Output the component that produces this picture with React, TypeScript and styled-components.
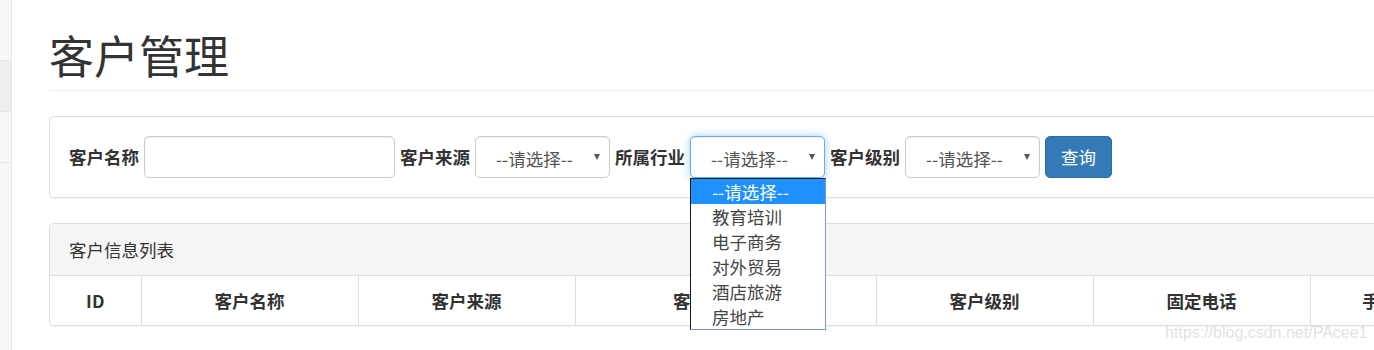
import React from "react";
import styled, { createGlobalStyle, css } from "styled-components";

const GlobalStyle = createGlobalStyle`
  html, body {
    margin: 0;
    padding: 0;
    background: #fff;
    overflow: hidden;
  }
  body {
    font-family: "Noto Sans CJK SC", "Liberation Sans", sans-serif;
    color: #333;
    font-size: 17.5px;
  }
  * { box-sizing: border-box; }
`;

const Page = styled.div`
  display: flex;
  width: 1700px;
  min-height: 350px;
  position: relative;
`;

const Sidebar = styled.nav`
  width: 12px;
  flex: none;
  background: #f8f8f8;
  border-right: 1px solid #e7e7e7;
  display: flex;
  flex-direction: column;
`;

const NavItem = styled.div<{ $h: number; $active?: boolean }>`
  height: ${(p) => p.$h}px;
  background: ${(p) => (p.$active ? "#eeeeee" : "transparent")};
  border-bottom: 1px solid #e7e7e7;
`;

const Main = styled.main`
  flex: 1;
  padding: 0 0 0 37px;
`;

const Title = styled.h1`
  margin: 30px 0 0;
  padding-bottom: 11px;
  border-bottom: 1px solid #eeeeee;
  font-size: 45px;
  line-height: 49px;
  font-weight: 400;
  color: #333;
`;

const Panel = styled.section`
  margin-top: 25px;
  border: 1px solid #dddddd;
  border-radius: 5px;
  background: #fff;
  box-shadow: 0 1px 1px rgba(0, 0, 0, 0.05);
`;

const SearchBody = styled.div`
  height: 80px;
  padding: 0 19px;
  display: flex;
  align-items: center;
`;

const Label = styled.label`
  font-weight: 700;
  font-size: 17.5px;
  color: #333;
  white-space: nowrap;
  margin-right: 5px;
  line-height: 24px;
`;

const inputBase = css`
  height: 42px;
  flex: none;
  border: 1px solid #cccccc;
  border-radius: 5px;
  background: #fff;
  box-shadow: inset 0 1px 1px rgba(0, 0, 0, 0.075);
`;

const TextInput = styled.div`
  ${inputBase};
  width: 251px;
  margin-right: 5px;
`;

const SelectBox = styled.div<{ $focused?: boolean }>`
  ${inputBase};
  position: relative;
  width: 135px;
  margin-right: 5px;
  display: flex;
  align-items: center;
  justify-content: space-between;
  padding: 0 9px 0 20px;
  color: #555;
  font-size: 17.5px;
  ${(p) =>
    p.$focused &&
    css`
      border-color: #66afe9;
      box-shadow: inset 0 1px 1px rgba(0, 0, 0, 0.075),
        0 0 8px rgba(102, 175, 233, 0.6);
    `}
`;

const SelectText = styled.span`
  line-height: 24px;
  padding-top: 3px;
`;

const Arrow = styled.span`
  width: 0;
  height: 0;
  border-left: 3.5px solid transparent;
  border-right: 3.5px solid transparent;
  border-top: 6px solid #555;
`;

const Dropdown = styled.ul`
  position: absolute;
  top: 41px;
  left: -1px;
  width: 136px;
  margin: 0;
  padding: 0;
  list-style: none;
  background: #fff;
  border-top: 1px solid #1a1a1a;
  border-left: 1px solid #1a1a1a;
  border-right: 1px solid #7a96c8;
  border-bottom: 1px solid #7a96c8;
  z-index: 5;
`;

const Option = styled.li<{ $selected?: boolean }>`
  height: 25px;
  line-height: 25px;
  padding-left: 21px;
  font-size: 17.5px;
  color: ${(p) => (p.$selected ? "#fff" : "#444")};
  background: ${(p) => (p.$selected ? "#1e90ff" : "transparent")};
`;

const Button = styled.button`
  height: 42px;
  padding: 0 15px;
  border: 1px solid #2e6da4;
  border-radius: 5px;
  background: #337ab7;
  color: #fff;
  font-family: "Noto Sans CJK SC", "Liberation Sans", sans-serif;
  font-size: 17.5px;
  line-height: 24px;
`;

const PanelHeading = styled.div`
  height: 52px;
  display: flex;
  align-items: center;
  padding: 0 19px;
  background: #f5f5f5;
  border-bottom: 1px solid #dddddd;
  border-radius: 5px 5px 0 0;
  font-size: 17.5px;
  color: #333;
`;

const Table = styled.table`
  border-collapse: collapse;
  table-layout: fixed;
`;

const Th = styled.th<{ $w: number }>`
  width: ${(p) => p.$w}px;
  height: 49px;
  padding: 0;
  text-align: center;
  font-weight: 700;
  font-size: 17.5px;
  color: #333;
  border-left: 1px solid #dddddd;
  &:first-child {
    border-left: none;
  }
`;

const Watermark = styled.div`
  position: absolute;
  left: 1165px;
  top: 324px;
  font-family: "Liberation Sans", Arial, sans-serif;
  font-size: 16px;
  color: rgba(205, 205, 205, 0.6);
  white-space: nowrap;
  pointer-events: none;
`;

const industries = ["教育培训", "电子商务", "对外贸易", "酒店旅游", "房地产"];

const columns: { name: string; w: number }[] = [
  { name: "ID", w: 91 },
  { name: "客户名称", w: 217 },
  { name: "客户来源", w: 217 },
  { name: "客户所属行业", w: 301 },
  { name: "客户级别", w: 217 },
  { name: "固定电话", w: 217 },
  { name: "手机号码", w: 174 },
];

export default function App() {
  return (
    <>
      <GlobalStyle />
      <Page>
        <Sidebar>
          <NavItem $h={61} />
          <NavItem $h={51} $active />
          <NavItem $h={51} />
        </Sidebar>
        <Main>
          <Title>客户管理</Title>
          <Panel>
            <SearchBody>
              <Label>客户名称</Label>
              <TextInput />
              <Label>客户来源</Label>
              <SelectBox>
                <SelectText>--请选择--</SelectText>
                <Arrow />
              </SelectBox>
              <Label>所属行业</Label>
              <SelectBox $focused>
                <SelectText>--请选择--</SelectText>
                <Arrow />
                <Dropdown>
                  <Option $selected>--请选择--</Option>
                  {industries.map((i) => (
                    <Option key={i}>{i}</Option>
                  ))}
                </Dropdown>
              </SelectBox>
              <Label>客户级别</Label>
              <SelectBox>
                <SelectText>--请选择--</SelectText>
                <Arrow />
              </SelectBox>
              <Button>查询</Button>
            </SearchBody>
          </Panel>
          <Panel>
            <PanelHeading>客户信息列表</PanelHeading>
            <Table>
              <thead>
                <tr>
                  {columns.map((c) => (
                    <Th key={c.name} $w={c.w}>
                      {c.name}
                    </Th>
                  ))}
                </tr>
              </thead>
            </Table>
          </Panel>
        </Main>
        <Watermark>https://blog.csdn.net/PAcee1</Watermark>
      </Page>
    </>
  );
}
